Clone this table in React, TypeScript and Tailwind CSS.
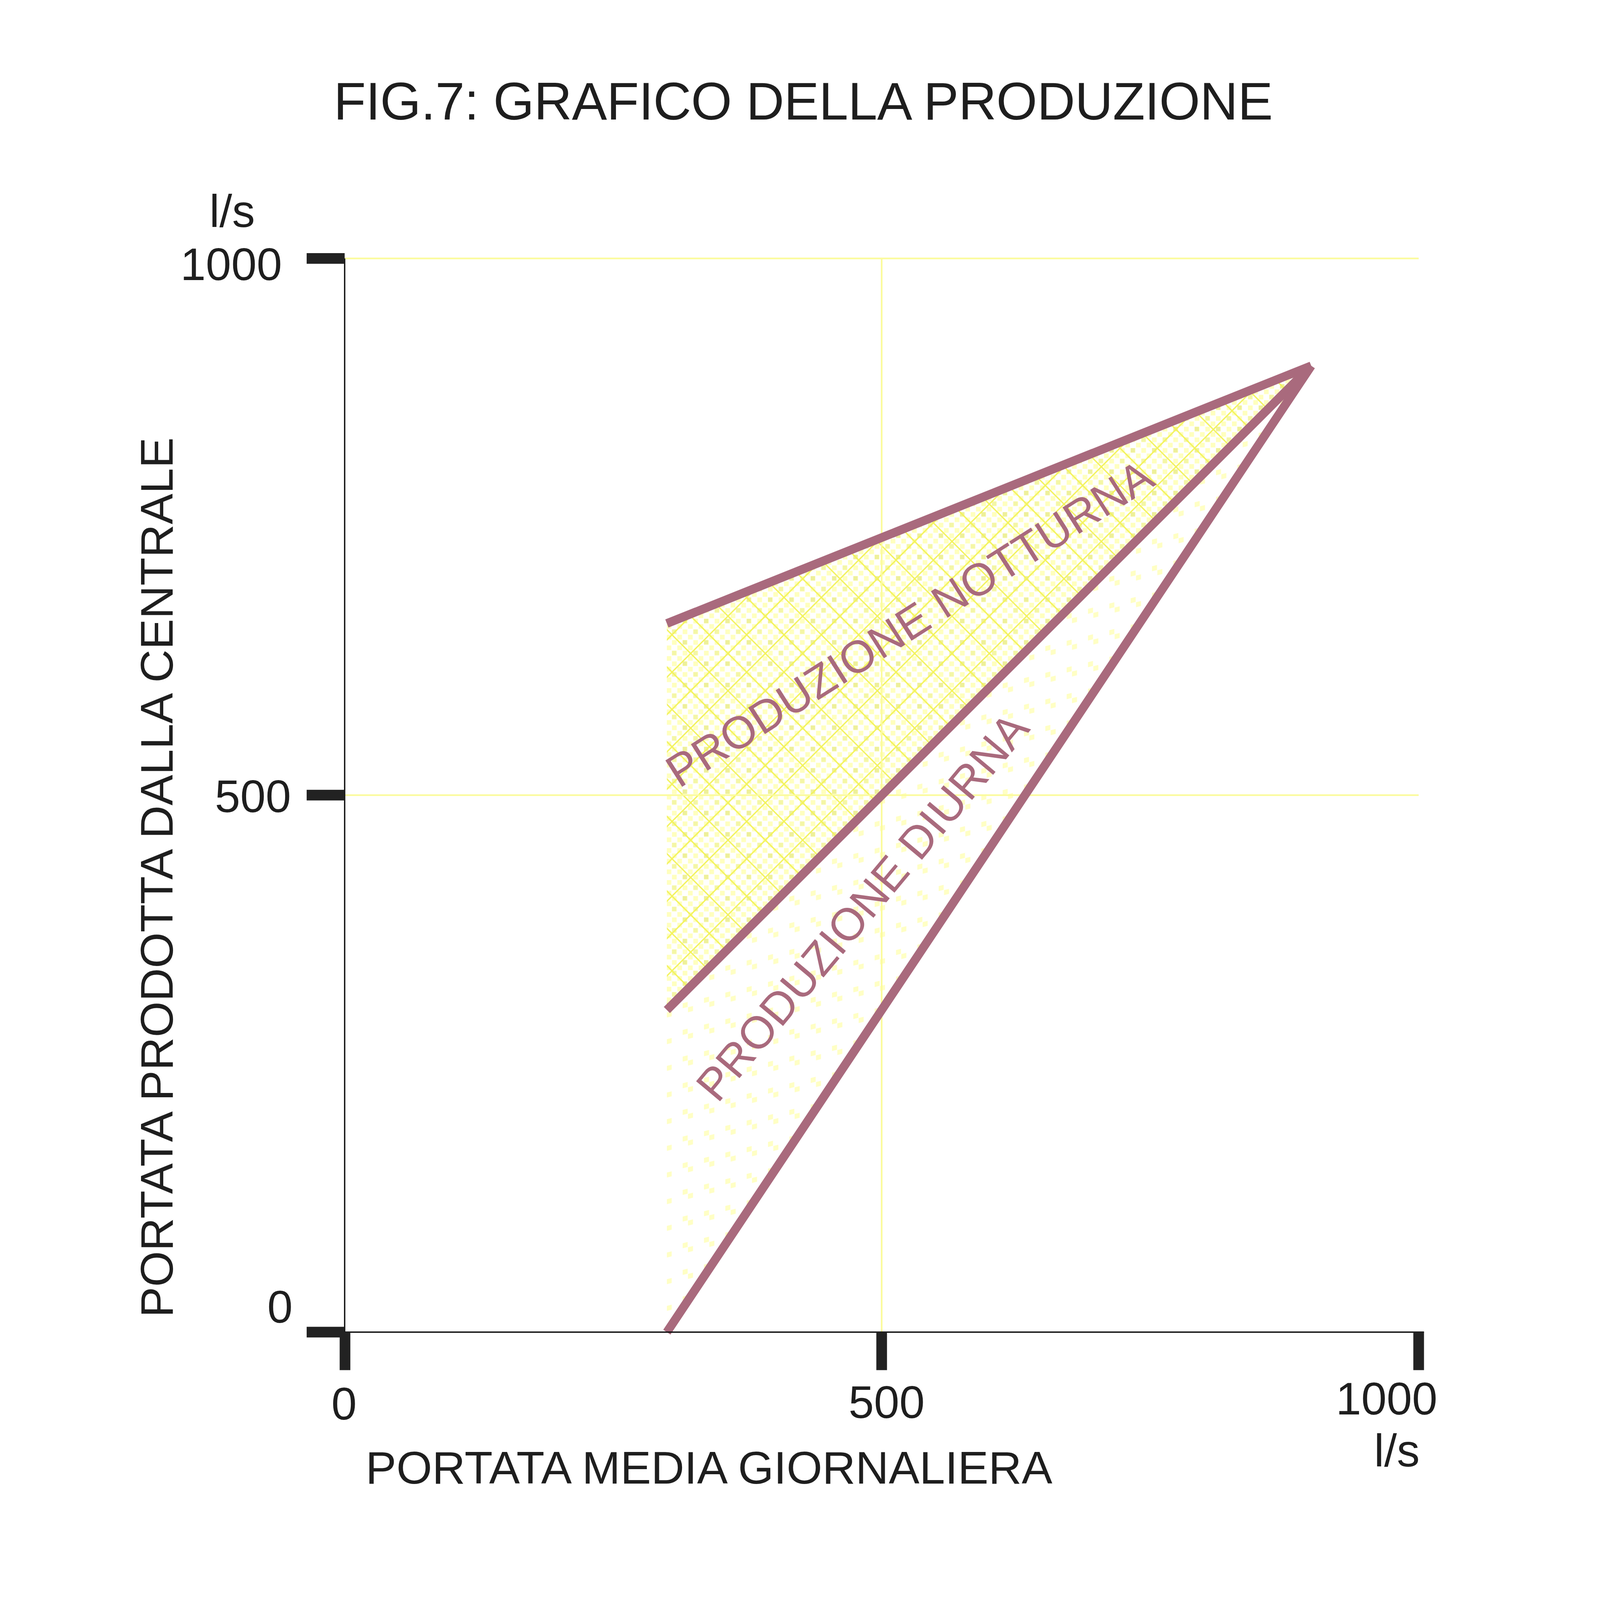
import React from "react";

const X = (v: number) => 1034 + v * 3.222;
const Y = (v: number) => 3996 - v * 3.221;

const MAUVE = "#a96a7d";
const INK = "#1e1e1e";
const GRID = "#fbfb9c";

export default function App() {
  const upper = `${X(300)},${Y(660)} ${X(900)},${Y(900)} ${X(300)},${Y(300)}`;
  const lower = `${X(300)},${Y(300)} ${X(900)},${Y(900)} ${X(300)},${Y(0)}`;
  const font = "'Liberation Sans', Arial, sans-serif";

  return (
    <div className="w-screen h-screen bg-white overflow-hidden flex flex-col">
      <h1
        className="pt-[4.7083vw] pl-[0.4vw] text-center text-[3.2917vw] leading-none tracking-[-0.0125vw] font-normal text-[#1e1e1e]"
        style={{ fontFamily: font }}
      >
        FIG.7: GRAFICO DELLA PRODUZIONE
      </h1>
      <svg
        className="block w-[100vw] h-[89.8125vw] shrink-0"
        viewBox="0 384 4800 4311"
        preserveAspectRatio="xMidYMin meet"
        xmlns="http://www.w3.org/2000/svg"
      >
        <defs>
          <pattern id="dots" width="32" height="32" patternUnits="userSpaceOnUse">
            <rect x="0" y="0" width="14" height="14" fill="#ffffbe" />
            <rect x="16" y="16" width="14" height="14" fill="#ffffbe" />
          </pattern>
          <pattern id="dots2" width="64" height="64" patternUnits="userSpaceOnUse">
            <rect x="0" y="0" width="13" height="13" fill="#eef09a" />
            <rect x="32" y="32" width="13" height="13" fill="#f4f6a6" />
          </pattern>
          <pattern id="cross" width="112" height="112" patternUnits="userSpaceOnUse">
            <path d="M-8 -8L120 120M120 -8L-8 120" stroke="#f3f35c" strokeWidth="4" />
          </pattern>
          <pattern
            id="sparse"
            width="64"
            height="80"
            patternUnits="userSpaceOnUse"
            patternTransform="skewY(-14)"
          >
            <rect x="0" y="0" width="15" height="15" fill="#ffffc4" />
            <rect x="16" y="16" width="15" height="15" fill="#ffffc4" />
          </pattern>
        </defs>

        {/* hatched areas */}
        <polygon points={upper} fill="url(#dots)" />
        <polygon points={upper} fill="url(#dots2)" />
        <polygon points={upper} fill="url(#cross)" />
        <polygon points={lower} fill="url(#sparse)" />

        {/* grid */}
        <line x1={1034} y1={775} x2={4256} y2={775} stroke={GRID} strokeWidth={5} />
        <line x1={1034} y1={2385} x2={4256} y2={2385} stroke={GRID} strokeWidth={5} />
        <line x1={2645} y1={775} x2={2645} y2={3996} stroke={GRID} strokeWidth={5} />

        {/* production lines */}
        <g stroke={MAUVE} strokeWidth={26} strokeLinecap="butt">
          <line x1={X(300)} y1={Y(660)} x2={X(900)} y2={Y(900)} />
          <line x1={X(300)} y1={Y(300)} x2={X(900)} y2={Y(900)} />
          <line x1={X(300)} y1={Y(0)} x2={X(900)} y2={Y(900)} />
        </g>

        {/* rotated labels */}
        <g fill={MAUVE} fontFamily={font} fontSize={136}>
          <text transform="translate(2037 2366) rotate(-32.5)">PRODUZIONE NOTTURNA</text>
          <text transform="translate(2153 3312) rotate(-50.1)">PRODUZIONE DIURNA</text>
        </g>

        {/* axes */}
        <line x1={1034} y1={775} x2={1034} y2={3998} stroke="#111" strokeWidth={4} />
        <line x1={1032} y1={3996} x2={4272} y2={3996} stroke="#111" strokeWidth={4} />
        <g fill="#222">
          <rect x={920} y={759} width={114} height={32} />
          <rect x={920} y={2369} width={114} height={32} />
          <rect x={920} y={3980} width={114} height={32} />
          <rect x={1019} y={3996} width={32} height={114} />
          <rect x={2629} y={3996} width={32} height={114} />
          <rect x={4240} y={3996} width={32} height={114} />
        </g>

        {/* axis texts */}
        <g fill={INK} fontFamily={font} fontSize={137}>
          <text x={628} y={680}>l/s</text>
          <text x={846} y={840} textAnchor="end">1000</text>
          <text x={873} y={2436} textAnchor="end">500</text>
          <text x={878} y={3968} textAnchor="end">0</text>
          <text x={1032} y={4258} textAnchor="middle">0</text>
          <text x={2660} y={4254} textAnchor="middle">500</text>
          <text x={4160} y={4243} textAnchor="middle">1000</text>
          <text x={4122} y={4399}>l/s</text>
          <text x={1097} y={4450} fontSize={138}>PORTATA MEDIA GIORNALIERA</text>
          <text transform="translate(518 3952) rotate(-90)" fontSize={138}>
            PORTATA PRODOTTA DALLA CENTRALE
          </text>
        </g>
      </svg>
    </div>
  );
}
